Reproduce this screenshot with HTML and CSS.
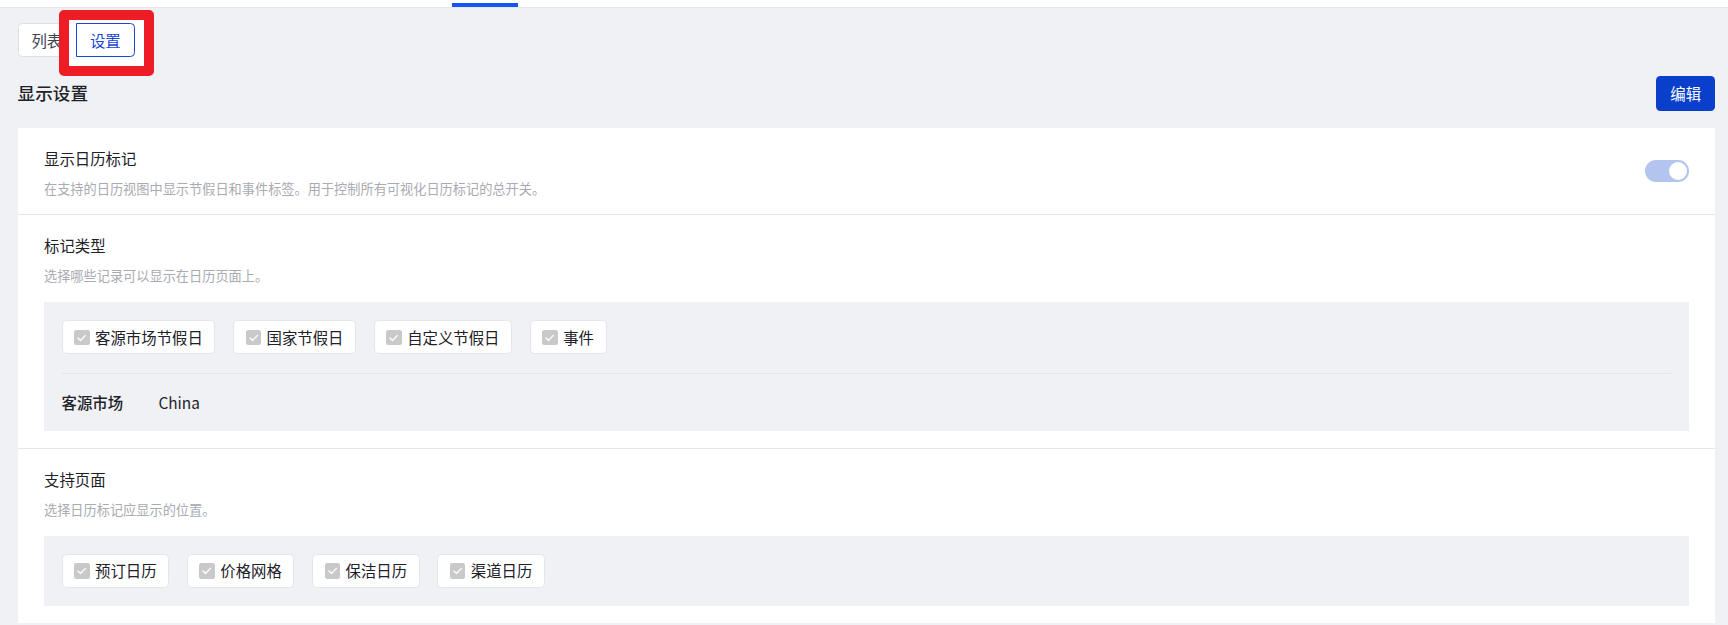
FILE: index.html
```html
<!DOCTYPE html>
<html lang="zh-CN">
<head>
<meta charset="utf-8">
<title>显示设置</title>
<link rel="stylesheet" href="styles.css">
</head>
<body>
<div class="topbar"><span class="topbar-ind"></span></div>
<div class="page">
  <div class="tabs">
    <button class="tab">列表</button>
    <button class="tab tab-active">设置</button>
    <div class="annot"></div>
  </div>

  <div class="head">
    <h2 class="head-title">显示设置</h2>
    <button class="btn-primary">编辑</button>
  </div>

  <div class="card">
    <div class="sec sec-row">
      <div class="sec-text">
        <div class="sec-title">显示日历标记</div>
        <div class="sec-desc">在支持的日历视图中显示节假日和事件标签。用于控制所有可视化日历标记的总开关。</div>
      </div>
      <span class="switch"><span class="switch-knob"></span></span>
    </div>

    <div class="sec">
      <div class="sec-title">标记类型</div>
      <div class="sec-desc">选择哪些记录可以显示在日历页面上。</div>
      <div class="panel">
        <div class="chips">
          <label class="chip"><span class="cb"><svg viewBox="0 0 14 14"><path d="M3.6 7.2l2.3 2.3 4.5-4.6"/></svg></span>客源市场节假日</label>
          <label class="chip"><span class="cb"><svg viewBox="0 0 14 14"><path d="M3.6 7.2l2.3 2.3 4.5-4.6"/></svg></span>国家节假日</label>
          <label class="chip"><span class="cb"><svg viewBox="0 0 14 14"><path d="M3.6 7.2l2.3 2.3 4.5-4.6"/></svg></span>自定义节假日</label>
          <label class="chip"><span class="cb"><svg viewBox="0 0 14 14"><path d="M3.6 7.2l2.3 2.3 4.5-4.6"/></svg></span>事件</label>
        </div>
        <div class="panel-divider"></div>
        <div class="kv">
          <span class="kv-label">客源市场</span>
          <span class="kv-value">China</span>
        </div>
      </div>
    </div>

    <div class="sec">
      <div class="sec-title">支持页面</div>
      <div class="sec-desc">选择日历标记应显示的位置。</div>
      <div class="panel panel-compact">
        <div class="chips">
          <label class="chip"><span class="cb"><svg viewBox="0 0 14 14"><path d="M3.6 7.2l2.3 2.3 4.5-4.6"/></svg></span>预订日历</label>
          <label class="chip"><span class="cb"><svg viewBox="0 0 14 14"><path d="M3.6 7.2l2.3 2.3 4.5-4.6"/></svg></span>价格网格</label>
          <label class="chip"><span class="cb"><svg viewBox="0 0 14 14"><path d="M3.6 7.2l2.3 2.3 4.5-4.6"/></svg></span>保洁日历</label>
          <label class="chip"><span class="cb"><svg viewBox="0 0 14 14"><path d="M3.6 7.2l2.3 2.3 4.5-4.6"/></svg></span>渠道日历</label>
        </div>
      </div>
    </div>
  </div>
</div>
</body>
</html>
```

FILE: styles.css
```css
* { box-sizing: border-box; }

html, body {
  margin: 0;
  padding: 0;
  background: #f0f1f5;
  font-family: "Noto Sans CJK SC", "Noto Sans", sans-serif;
  color: #1d2129;
  overflow: hidden;
}

.topbar {
  height: 8px;
  background: #ffffff;
  border-bottom: 1px solid #e6e8ee;
  display: flex;
  align-items: flex-end;
  padding-left: 452px;
}

.topbar-ind {
  display: block;
  width: 66px;
  height: 4px;
  background: #1456f5;
}

.page {
  padding: 15.3px 13px 0 17.6px;
}

/* segmented tabs */
.tabs {
  position: relative;
  display: flex;
  height: 34px;
}

.tab {
  position: relative;
  width: 58.5px;
  height: 34px;
  padding: 0;
  margin: 0;
  font-family: inherit;
  font-size: 15.4px;
  color: #3c4350;
  background: #ffffff;
  border: 1px solid #dcdfe6;
  border-radius: 4.4px 0 0 4.4px;
  cursor: pointer;
}

.tab-active {
  z-index: 2;
  color: #1a47d6;
  border-color: #1a47d6;
  border-radius: 0 4.4px 4.4px 0;
}

.annot {
  position: absolute;
  left: 41.7px;
  top: -13.3px;
  width: 94.8px;
  height: 65.5px;
  border: 10px solid #ee1c25;
  border-radius: 5px;
  background: #ffffff;
  z-index: 1;
}

/* heading */
.head {
  margin-top: 18.7px;
  height: 34.7px;
  display: flex;
  align-items: center;
  justify-content: space-between;
}

.head-title {
  margin: 0;
  font-size: 17.6px;
  font-weight: 500;
  color: #1d2129;
  line-height: 24px;
}

.btn-primary {
  width: 58.7px;
  height: 34.7px;
  padding: 0;
  font-family: inherit;
  font-size: 15.4px;
  font-weight: 400;
  color: #ffffff;
  background: #0a3fcb;
  border: none;
  border-radius: 4.4px;
  cursor: pointer;
}

/* card */
.card {
  margin-top: 17.3px;
  background: #ffffff;
}

.sec {
  padding: 18px 26.4px 16.3px;
}

.sec + .sec {
  border-top: 1px solid #e5e6eb;
}

.sec-row {
  display: flex;
  align-items: center;
  justify-content: space-between;
  padding-top: 18px;
  padding-bottom: 17px;
}

.sec-title {
  font-size: 15.4px;
  line-height: 24px;
  color: #1d2129;
}

.sec-desc {
  margin-top: 10px;
  font-size: 13.2px;
  line-height: 17px;
  color: #a8abb2;
}

/* switch */
.switch {
  position: relative;
  display: flex;
  align-items: center;
  justify-content: flex-end;
  width: 44px;
  height: 22px;
  padding: 2px;
  border-radius: 11px;
  background: #b3c5ef;
}

.switch-knob {
  display: block;
  width: 18px;
  height: 18px;
  border-radius: 50%;
  background: #ffffff;
}

/* gray panel */
.panel {
  margin-top: 18px;
  background: #f0f1f5;
  padding: 18.5px 17.6px 17px;
}

.panel-compact {
  padding-bottom: 18.5px;
}

.chips {
  display: flex;
  gap: 17.6px;
}

.chip {
  display: inline-flex;
  align-items: center;
  gap: 5.5px;
  height: 33.8px;
  padding: 0 11.6px;
  background: #ffffff;
  border: 1px solid #e5e6eb;
  border-radius: 4.4px;
  font-size: 15.4px;
  color: #1d2129;
  line-height: 1;
}

.cb {
  display: inline-flex;
  width: 15.4px;
  height: 15.4px;
  border-radius: 2.2px;
  background: #c9c9c9;
}

.cb svg {
  width: 15.4px;
  height: 15.4px;
  fill: none;
  stroke: #ffffff;
  stroke-width: 1.2;
  stroke-linecap: round;
  stroke-linejoin: round;
}

.panel-divider {
  height: 1px;
  margin: 19px 0 16px;
  background: #e3e5ea;
}

.kv {
  display: flex;
  align-items: center;
  height: 24px;
  font-size: 15.4px;
}

.kv-label {
  width: 96.8px;
  font-weight: 500;
  color: #1d2129;
}

.kv-value {
  color: #1d2129;
}
```
